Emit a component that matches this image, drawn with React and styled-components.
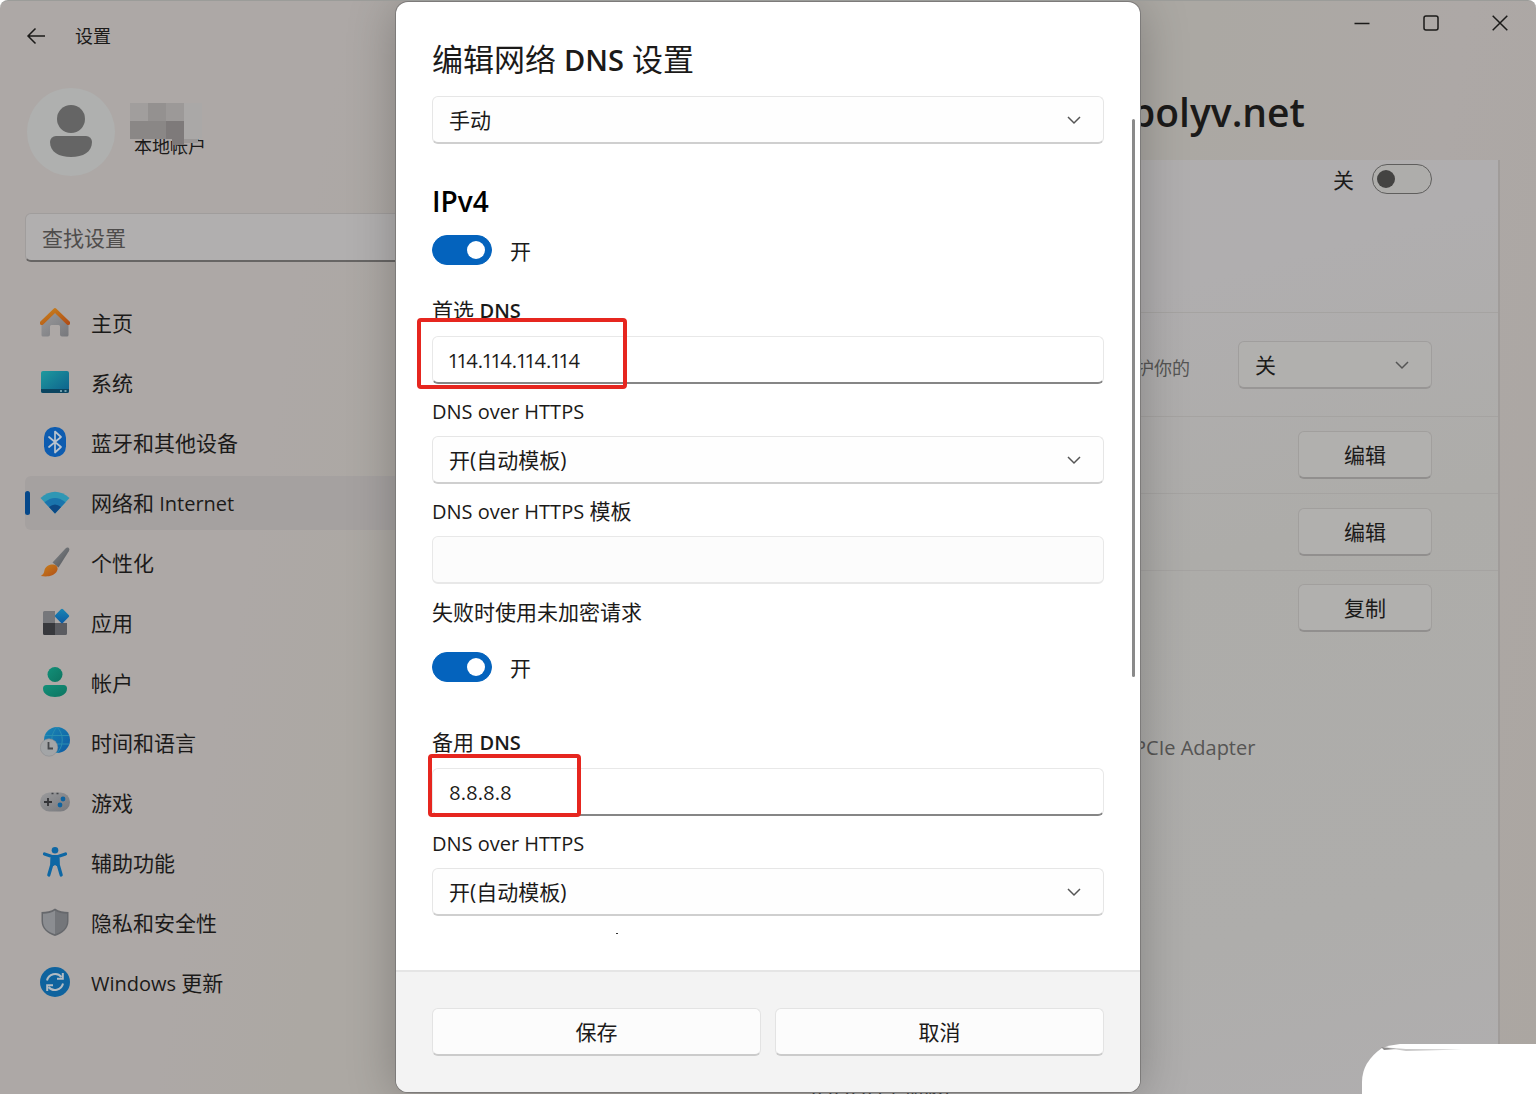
import React from "react";
import styled, { createGlobalStyle } from "styled-components";

const navItems = [
    { icon: "home", text: "主页" },
    { icon: "system", text: "系统" },
    { icon: "bluetooth", text: "蓝牙和其他设备" },
    { icon: "network", text: "网络和", latin: "Internet", active: true },
    { icon: "brush", text: "个性化" },
    { icon: "apps", text: "应用" },
    { icon: "account", text: "帐户" },
    { icon: "time", text: "时间和语言" },
    { icon: "game", text: "游戏" },
    { icon: "access", text: "辅助功能" },
    { icon: "shield", text: "隐私和安全性" },
    { icon: "update", text: "更新", latin: "Windows", latinFirst: true },
];

const icons = {
    home: (
        <>
            <path d="M5 15 15 6l10 9 3.500 2v11a1.500 1.500 0 0 1-1.500 1.500h-5a2 2 0 0 1-2-2v-8a1.500 1.500 0 0 0-1.500-1.500h-7a1.500 1.500 0 0 0-1.500 1.500v8a2 2 0 0 1-2 2H3A1.500 1.500 0 0 1 1.500 28V17z" fill="url(#gray)" />
            <path d="M1.800 16 15 3.200 28.200 16" fill="none" stroke="url(#orange)" strokeWidth="4" strokeLinecap="round" strokeLinejoin="round" />
        </>
    ),
    system: (
        <>
            <rect x="1" y="4" width="28" height="22" rx="2" fill="url(#teal)" />
            <path d="M1 22h28v2a2 2 0 0 1-2 2H3a2 2 0 0 1-2-2z" fill="#0b4560" />
            <path d="M20 24h2M24.500 24h2" stroke="#8fb9c4" strokeWidth="1.500" />
        </>
    ),
    bluetooth: (
        <>
            <rect x="4" y="0" width="22" height="30" rx="10.500" fill="#0d5cb0" />
            <path d="m9 10 12 10-6 5.500v-21l6 5.500L9 20" fill="none" stroke="#b9c3ce" strokeWidth="1.700" strokeLinejoin="round" strokeLinecap="round" />
        </>
    ),
    network: (
        <>
            <path d="M.500 11Q15-1.500 29.500 11L15 26.500z" fill="#2f97b4" />
            <path d="M4.500 15.300Q15 6.500 25.500 15.300L15 26.500z" fill="#1a74ac" />
            <path d="M9 20Q15 15 21 20l-6 6.500z" fill="#0c4884" />
        </>
    ),
    brush: (
        <>
            <path d="M28.500.800c1.200 1 1 2.300.300 3.500L18.500 20.500l-6-5L25.500 1.500c1-1 2-1.400 3-.700z" fill="url(#steel)" />
            <path d="M12.500 17.500c3.500-.500 6.500 3 4.500 6.500C14 29.500 7 30 .800 29c2-1.500 3-2.500 3.500-5 .700-4 4-6.500 8.200-6.500z" fill="url(#orange)" />
        </>
    ),
    apps: (
        <>
            <path d="M3 5.500A1.500 1.500 0 0 1 4.500 4H15v12H3z" fill="#76777b" />
            <path d="M3 16h12v12H4.500A1.500 1.500 0 0 1 3 26.500z" fill="#38393d" />
            <path d="M15 16h12v10.500a1.500 1.500 0 0 1-1.500 1.500H15z" fill="#5b5c61" />
            <rect x="16.500" y="3.500" width="11" height="11" rx="1.500" transform="rotate(45 22 9)" fill="url(#blue)" />
        </>
    ),
    account: (
        <>
            <circle cx="15" cy="7.500" r="7.500" fill="url(#green)" />
            <path d="M6.500 18h17a3.500 3.500 0 0 1 3.500 3.500C27 27 21.500 30 15 30S3 27 3 21.500A3.500 3.500 0 0 1 6.500 18z" fill="url(#green)" />
        </>
    ),
    time: (
        <>
            <circle cx="17" cy="13" r="13" fill="url(#blue)" />
            <path d="M5 8.500h24M5 17h24M17 0c-7 7-7 19 0 26M17 0c7 7 7 19 0 26" fill="none" stroke="#2b8db0" strokeWidth="1" />
            <circle cx="9" cy="20.500" r="8.700" fill="#a3a5a7" stroke="#8b8d90" strokeWidth=".600" />
            <path d="M8.500 15v6.500H13" fill="none" stroke="#45484c" strokeWidth="1.800" />
        </>
    ),
    game: (
        <>
            <rect x="0" y="5.500" width="30" height="19" rx="9.500" fill="url(#gray)" />
            <path d="M8 11v8M4 15h8" stroke="#333438" strokeWidth="1.800" />
            <path d="M11.500 6.500h2M16.500 6.500h2" stroke="#44464a" strokeWidth="1.500" />
            <circle cx="23" cy="12" r="2.400" fill="#0f639f" />
            <circle cx="20" cy="18" r="2.400" fill="#0f639f" />
        </>
    ),
    access: (
        <>
            <circle cx="15" cy="3.300" r="3.300" fill="#0e67a4" />
            <path d="M4.500 7 12 9.500h6L25.500 7M12 10l-.300 8L8.800 28M18 10l.300 8 2.900 10" fill="none" stroke="#0e67a4" strokeWidth="3.200" strokeLinecap="round" strokeLinejoin="round" />
            <path d="M11 9h8v10h-2.500L15 18l-1.500 1H11z" fill="#0e67a4" />
        </>
    ),
    shield: (
        <>
            <path d="M15 1.500C19 4.300 23.500 5 28.500 5v9c0 8-6 12.500-13.500 15C7.500 26.500 1.500 22 1.500 14V5C6.500 5 11 4.300 15 1.500z" fill="#66686c" />
            <path d="M15 3.500c3.500 2.200 7.500 3.200 12 3.300V14c0 7-5 11-12 13.300z" fill="#74767a" />
            <path d="M15 3.500C11.500 5.700 7.500 6.700 3 6.800V14c0 7 5 11 12 13.300z" fill="#8b8d91" />
        </>
    ),
    update: (
        <>
            <circle cx="15" cy="15" r="15" fill="#0f639e" />
            <path d="M7 13.500a8.300 8.300 0 0 1 14.500-3.500M23 16.500A8.300 8.300 0 0 1 8.500 20" fill="none" stroke="#b3bcc3" strokeWidth="2" />
            <path d="M22.800 6v5.800H17M7.200 24v-5.800H13" fill="none" stroke="#b3bcc3" strokeWidth="2" />
        </>
    ),
};

const Gradient = ({ id, from, to }) => (
    <linearGradient id={id} x1="0" y1="0" x2="1" y2="1">
        <stop offset="0" stopColor={from} />
        <stop offset="1" stopColor={to} />
    </linearGradient>
);

const GradientDefs = () => (
    <HiddenSvg aria-hidden="true">
        <defs>
            <Gradient id="gray" from="#9a9a9c" to="#77787c" />
            <Gradient id="orange" from="#c9821d" to="#b04f17" />
            <Gradient id="teal" from="#1e9a9e" to="#0d5f8c" />
            <Gradient id="steel" from="#85888c" to="#4f5256" />
            <Gradient id="blue" from="#1a87b4" to="#0d5aa3" />
            <Gradient id="green" from="#129079" to="#0d7460" />
        </defs>
    </HiddenSvg>
);

const Chevron = () => (
    <svg width="14" height="14" viewBox="0 0 14 14" aria-hidden="true">
        <path d="m1 4 6 6 6-6" fill="none" stroke="#555" strokeWidth="1.500" />
    </svg>
);

const Dropdown = ({ id, value, label, dim }) => (
    <SelectBox>
        <Select id={id} aria-label={label} $dim={dim}>
            <option>{value}</option>
        </Select>
        <Chevron />
    </SelectBox>
);

const Sidebar = () => (
    <Aside>
        <Profile>
            <svg width="90" height="90" viewBox="0 0 90 90" aria-hidden="true">
                <circle cx="46" cy="45" r="44" fill="#afb0af" />
                <circle cx="46" cy="32" r="14" fill="#656565" />
                <path d="M31 49h30a6 6 0 0 1 6 6c0 10-9 15-21 15s-21-5-21-15a6 6 0 0 1 6-6z" fill="#656565" />
            </svg>
            <Account>
                <Mosaic viewBox="0 0 75 42" aria-hidden="true">
                    <path d="M0 0h72v36H0z" fill="#aaa8a7" />
                    <path d="M0 0h18v18H0z" fill="#a19e9d" />
                    <path d="M18 0h18v18H18z" fill="#949190" />
                    <path d="M36 0h18v18H36z" fill="#9c9998" />
                    <path d="M0 18h36v18H0z" fill="#8a8786" />
                    <path d="M36 18h18v24H42v-6h-6z" fill="#7e7a7a" />
                    <path d="M54 36h14v4H54z" fill="#9b9897" />
                </Mosaic>
                <span>本地帐户</span>
            </Account>
        </Profile>
        <Search type="text" placeholder="查找设置" aria-label="查找设置" />
        <Nav>
            {navItems.map((item) => (
                <NavLink key={item.icon} href="#" $active={item.active}>
                    <svg width="30" height="30" viewBox="0 0 30 30" aria-hidden="true">
                        {icons[item.icon]}
                    </svg>
                    <span>
                        {item.latinFirst && <Latin>{item.latin} </Latin>}
                        {item.text}
                        {item.latin && !item.latinFirst && <Latin> {item.latin}</Latin>}
                    </span>
                </NavLink>
            ))}
        </Nav>
    </Aside>
);

const Content = () => (
    <Main>
        <PageTitle>polyv.net</PageTitle>
        <Card>
            <Row $height={153} $top={4}>
                <SwitchLabel htmlFor="metered">关</SwitchLabel>
                <Switch id="metered" type="checkbox" $dim />
            </Row>
            <Row $height={104} $top={28}>
                <Hint>护你的</Hint>
                <SmallSelect>
                    <Dropdown value="关" label="关" dim />
                </SmallSelect>
            </Row>
            <Row $height={77} $top={14}>
                <SideButton type="button">编辑</SideButton>
            </Row>
            <Row $height={77} $top={14}>
                <SideButton type="button">编辑</SideButton>
            </Row>
            <LastRow $height={159} $top={13}>
                <SideButton type="button">复制</SideButton>
            </LastRow>
            <Adapter>PCIe Adapter</Adapter>
            <Server>8.8.8.8 (未加密)</Server>
        </Card>
    </Main>
);

const DnsDialog = () => (
    <Overlay>
        <Dialog role="dialog" aria-labelledby="dns-title">
            <Body>
                <Title id="dns-title">编辑网络 <b>DNS</b> 设置</Title>
                <Dropdown value="手动" label="编辑网络 DNS 设置" />
                <Heading>IPv4</Heading>
                <Toggle>
                    <Switch id="ipv4" type="checkbox" defaultChecked />
                    <SwitchLabel htmlFor="ipv4">开</SwitchLabel>
                </Toggle>
                <Field $gap={31} $labelGap={12}>
                    <label htmlFor="dns1">首选 <b>DNS</b></label>
                    <InputBox>
                        <Input id="dns1" type="text" defaultValue="114.114.114.114" />
                        <RedBox $top={-18} $left={-15} $width={210} $height={71} />
                    </InputBox>
                </Field>
                <Field $gap={13} $labelGap={11}>
                    <label htmlFor="doh1"><Latin>DNS over HTTPS</Latin></label>
                    <Dropdown id="doh1" value="开(自动模板)" />
                </Field>
                <Field $gap={13} $labelGap={11}>
                    <label htmlFor="template1"><Latin>DNS over HTTPS</Latin> 模板</label>
                    <Input id="template1" type="text" disabled />
                </Field>
                <Field $labelGap={26}>
                    <label htmlFor="fallback">失败时使用未加密请求</label>
                    <Toggle>
                        <Switch id="fallback" type="checkbox" defaultChecked />
                        <SwitchLabel htmlFor="fallback">开</SwitchLabel>
                    </Toggle>
                </Field>
                <Field $gap={46} $labelGap={12}>
                    <label htmlFor="dns2">备用 <b>DNS</b></label>
                    <InputBox>
                        <Input id="dns2" type="text" defaultValue="8.8.8.8" />
                        <RedBox $top={-14} $left={-4} $width={153} $height={63} />
                    </InputBox>
                </Field>
                <Field $gap={13} $labelGap={11}>
                    <label htmlFor="doh2"><Latin>DNS over HTTPS</Latin></label>
                    <Dropdown id="doh2" value="开(自动模板)" />
                </Field>
                <Speck />
                <Thumb />
            </Body>
            <Footer>
                <DialogButton type="button">保存</DialogButton>
                <DialogButton type="button">取消</DialogButton>
            </Footer>
        </Dialog>
    </Overlay>
);

const App = () => {
    return (
        <Window>
            <GlobalStyle />
            <GradientDefs />
            <TitleBar>
                <BackButton type="button" aria-label="返回">
                    <svg width="20" height="18" viewBox="0 0 20 18">
                        <path d="M19 9H2M9.500 1.500 2 9l7.500 7.500" />
                    </svg>
                </BackButton>
                <AppName>设置</AppName>
                <Controls>
                    <button type="button" aria-label="最小化">
                        <svg width="16" height="16" viewBox="0 0 16 16"><path d="M.500 8.500h15" /></svg>
                    </button>
                    <button type="button" aria-label="最大化">
                        <svg width="16" height="16" viewBox="0 0 16 16"><rect x="1" y="1" width="14" height="14" rx="2" /></svg>
                    </button>
                    <button type="button" aria-label="关闭">
                        <svg width="16" height="16" viewBox="0 0 16 16"><path d="m.700.700 14.600 14.600M15.300.700.700 15.300" /></svg>
                    </button>
                </Controls>
            </TitleBar>
            <Page>
                <Sidebar />
                <Content />
            </Page>
            <DnsDialog />
            <Corner viewBox="0 0 174 50" aria-hidden="true">
                <path d="M174 0H38Q28 1 20 4Q0 18 0 38V50H174z" fill="white" />
                <path d="M19 3 44 5 100 5.500 44 7z" fill="#c9c8c8" />
                <path d="m19 3 3 3 12-1z" fill="#8d8b8b" />
            </Corner>
        </Window>
    );
};

const GlobalStyle = createGlobalStyle`
* {
  box-sizing: border-box;
}
body {
  margin: 0;
  background: white;
  color: #1b1a19;
  font: 21px/28px "Open Sans", "Noto Sans CJK SC", sans-serif;
}
button, input, select {
  font: inherit;
  color: inherit;
}
b {
  font-weight: 600;
  font-size: 20px;
}
`;
const Latin = styled.span`
font-size: 20px;
white-space: pre;
`;
const HiddenSvg = styled.svg`
position: absolute;
width: 0;
height: 0;
`;
const Window = styled.div`
position: relative;
display: flex;
flex-direction: column;
height: 100vh;
overflow: hidden;
border-top: 1px solid #9b9c99;
border-radius: 8px 8px 0 0;
background: linear-gradient(100deg, #ada8a6 0%, #ada8a6 20%, #aca8a3 28%, #aba8a3 70%, #ada8a6 85%, #aba6a1 100%);
`;
const TitleBar = styled.header`
display: flex;
flex: none;
height: 71px;
padding: 0 2px 0 26px;
svg {
  fill: none;
  stroke: #1b1a19;
  stroke-width: 1.5px;
}
`;
const BackButton = styled.button`
display: flex;
align-items: center;
height: 70px;
padding: 0;
border: 0;
background: none;
`;
const AppName = styled.span`
flex: 1;
margin-left: 29px;
font-size: 18px;
line-height: 70px;
`;
const Controls = styled.div`
display: flex;
height: 44px;
button {
  display: flex;
  align-items: center;
  justify-content: center;
  width: 69px;
  padding: 0;
  border: 0;
  background: none;
}
`;
const Page = styled.div`
display: flex;
flex: 1;
min-height: 0;
`;
const Aside = styled.aside`
flex: 1;
min-width: 0;
padding: 15px 0 0 25px;
`;
const Profile = styled.div`
display: flex;
align-items: center;
gap: 15px;
`;
const Account = styled.div`
position: relative;
padding: 28px 0 0 4px;
font-size: 18px;
`;
const Mosaic = styled.svg`
position: absolute;
top: -1px;
left: 0;
width: 75px;
height: 42px;
`;
const Search = styled.input`
display: block;
width: 100%;
height: 49px;
margin: 36px 0 34px;
padding: 2px 16px 0;
border: 1px solid #a09d9c;
border-bottom: 2px solid #676564;
border-radius: 6px;
background: #b1afaf;
&::placeholder {
  color: #4e4c4b;
  opacity: 1;
}
`;
const Nav = styled.nav`
display: flex;
flex-direction: column;
gap: 6px;
`;
const NavLink = styled.a`
position: relative;
display: flex;
align-items: center;
gap: 21px;
height: 54px;
padding-left: 15px;
border-radius: 6px;
color: inherit;
text-decoration: none;
background: ${(props) => (props.$active ? "#a5a1a0" : "none")};
svg {
  margin-bottom: 2px;
}
&::before {
  content: "";
  display: ${(props) => (props.$active ? "block" : "none")};
  position: absolute;
  left: 0;
  width: 5px;
  height: 24px;
  border-radius: 3px;
  background: #05488a;
}
`;
const Main = styled.main`
display: flex;
flex-direction: column;
flex: 0 0 725px;
padding-right: 36px;
`;
const PageTitle = styled.h1`
flex: none;
height: 88px;
margin: 0;
padding-left: 320px;
font-size: 39px;
line-height: 80px;
font-weight: 600;
`;
const Card = styled.section`
flex: 1;
min-height: 0;
border-right: 2px solid #a09c9a;
background: linear-gradient(165deg, #b0aeae 0%, #b0aeaf 20%, #adaca9 45%, #aeadab 80%, #b0aeaf 100%);
`;
const Row = styled.div`
display: flex;
justify-content: flex-end;
align-items: flex-start;
height: ${(props) => props.$height}px;
padding: ${(props) => props.$top}px 66px 0 325px;
border-bottom: 1px solid #a5a3a1;
`;
const LastRow = styled(Row)`
border-bottom: 0;
`;
const Hint = styled.span`
flex: 1;
padding-top: 13px;
font-size: 18px;
color: #565554;
`;
const SmallSelect = styled.div`
width: 194px;
`;
const Adapter = styled.p`
margin: 4px 0 0;
padding-left: 323px;
font-size: 20px;
color: #565554;
`;
const Server = styled.p`
margin: 320px 0 0;
font-size: 20px;
color: #444;
`;
const SelectBox = styled.div`
position: relative;
svg {
  position: absolute;
  right: 23px;
  top: 17px;
  pointer-events: none;
}
`;
const Select = styled.select`
display: block;
appearance: none;
width: 100%;
height: 48px;
padding: 0 16px;
border: 1px solid ${(props) => (props.$dim ? "#a09e9d" : "#e6e6e6")};
border-bottom: 2px solid ${(props) => (props.$dim ? "#989695" : "#cfcfcf")};
border-radius: 6px;
background: ${(props) => (props.$dim ? "#b1b0ae" : "#fefefe")};
`;
const SideButton = styled.button`
width: 134px;
height: 48px;
border: 1px solid #a19f9d;
border-bottom: 2px solid #918f8e;
border-radius: 6px;
background: #b1b0ae;
`;
const Switch = styled.input`
appearance: none;
display: flex;
align-items: center;
width: 60px;
height: 30px;
margin: 0;
padding: 0 4px;
border: 1px solid #5f5e5d;
border-radius: 15px;
background: ${(props) => (props.$dim ? "#aeadab" : "white")};
&::before {
  content: "";
  width: 18px;
  height: 18px;
  border-radius: 50%;
  background: #444342;
}
&:checked {
  justify-content: flex-end;
  padding: 0 6px;
  border-color: #0463bd;
  background: #0463bd;
}
&:checked::before {
  background: white;
}
`;
const SwitchLabel = styled.label`
margin: 2px 18px 0;
`;
const Overlay = styled.div`
position: absolute;
inset: 0;
display: flex;
justify-content: center;
padding: 1px 0 2px;
`;
const Dialog = styled.section`
display: flex;
flex-direction: column;
width: 744px;
overflow: hidden;
border-radius: 12px;
background: white;
box-shadow: 0 0 0 1px #7d7b7a, 0 4px 48px rgba(0, 0, 0, 0.25);
`;
const Body = styled.div`
position: relative;
flex: 1;
padding: 37px 36px 0;
`;
const Title = styled.h2`
margin: 0 0 16px;
font-size: 31px;
line-height: 40px;
font-weight: 400;
b {
  font-size: 29px;
}
`;
const Heading = styled.h3`
margin: 39px 0 16px;
font-size: 28px;
line-height: 36px;
font-weight: 600;
color: black;
`;
const Toggle = styled.div`
display: flex;
align-items: center;
height: 30px;
`;
const Field = styled.div`
display: flex;
flex-direction: column;
gap: ${(props) => props.$labelGap ?? 10}px;
margin-top: ${(props) => props.$gap ?? 14}px;
> label {
  height: 28px;
}
`;
const InputBox = styled.div`
position: relative;
`;
const Input = styled.input`
display: block;
width: 100%;
height: 48px;
padding: 2px 16px 0;
border: 1px solid #e8e8e8;
border-bottom: 2px solid ${(props) => (props.disabled ? "#e8e8e8" : "#868686")};
border-radius: 6px;
background: ${(props) => (props.disabled ? "#fcfcfc" : "white")};
font-size: 20px;
font-variant-numeric: proportional-nums;
`;
const RedBox = styled.span`
position: absolute;
top: ${(props) => props.$top}px;
left: ${(props) => props.$left}px;
width: ${(props) => props.$width}px;
height: ${(props) => props.$height}px;
border: 4px solid #e6261f;
border-radius: 4px;
pointer-events: none;
`;
const Speck = styled.div`
width: 2px;
height: 1px;
margin: 17px 0 0 184px;
background: #333;
`;
const Thumb = styled.div`
position: absolute;
top: 117px;
right: 5px;
width: 3px;
height: 558px;
border-radius: 2px;
background: #8a8a8a;
`;
const Footer = styled.footer`
display: flex;
gap: 14px;
padding: 36px;
border-top: 2px solid #e5e5e5;
background: #f3f3f3;
`;
const DialogButton = styled.button`
flex: 1;
height: 48px;
border: 1px solid #e3e3e3;
border-bottom: 2px solid #cbcbcb;
border-radius: 6px;
background: #fcfcfc;
`;
const Corner = styled.svg`
position: absolute;
right: 0;
bottom: 0;
width: 174px;
height: 50px;
`;

export default App;
